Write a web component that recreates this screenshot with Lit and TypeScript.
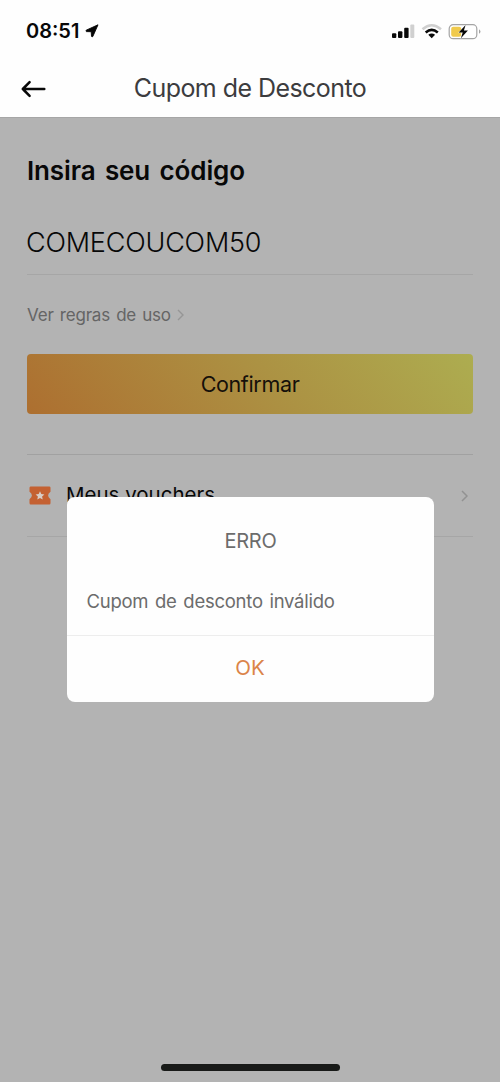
import { LitElement, html, css } from "lit";
import { customElement } from "lit/decorators.js";

@customElement("app-root")
export class AppRoot extends LitElement {
  static styles = css`
    :host { display: block; position: relative; width: 500px; height: 1082px; overflow: hidden; background: #b3b3b3; font-family: Inter, "Liberation Sans", sans-serif; color: #080808; }
    * { box-sizing: border-box; }
    svg { display: block; flex: none; }
    header { height: 117px; background: #fefefe; }
    .status { height: 60px; padding: 1px 18px 0 26px; display: flex; align-items: center; }
    .time { font-size: 20px; font-weight: 600; letter-spacing: 0; line-height: 24px; margin-right: 5px; width: 54px; white-space: nowrap; }
    .system { margin-left: auto; }
    .nav { height: 57px; display: grid; grid-template-columns: 68px 1fr 68px; align-items: center; }
    .back { margin-left: 20px; }
    h1 { margin: 0; padding-bottom: 1px; font-size: 25px; font-weight: 380; line-height: 30px; color: #3c3c3e; text-align: center; letter-spacing: -.55px; white-space: nowrap; }
    main { padding: 37px 27px 0; border-top: 1px solid #a6a6a6; }
    h2 { margin: 0; font-size: 26px; font-weight: 570; line-height: 32px; word-spacing: 3px; letter-spacing: -.12px; white-space: nowrap; }
    .code { height: 88px; padding-top: 38px; font-size: 27px; font-weight: 350; line-height: 36px; letter-spacing: -.2px; text-indent: -1px; border-bottom: 1px solid #a6a6a6; white-space: nowrap; }
    .rules { height: 79px; padding-top: 28px; display: flex; align-items: flex-start; gap: 6px; font-size: 17px; line-height: 25px; letter-spacing: -.18px; word-spacing: 1.5px; color: #656565; white-space: nowrap; }
    .rules svg { margin-top: 6px; }
    .confirm { display: block; width: 100%; height: 60px; border: 0; padding: 0; border-radius: 4px; background: linear-gradient(50deg, #ad6f30, #ac9042 52%, #adad50); color: #15100a; font: 380 21.5px/60px Inter, sans-serif; letter-spacing: -.35px; text-align: center; }
    .vouchers { margin-top: 40px; height: 83px; border-top: 1px solid #a1a1a1; border-bottom: 1px solid #a6a6a6; display: flex; align-items: center; font-size: 20.5px; white-space: nowrap; }
    .ticket { margin: 0 15px 0 2px; }
    .label { padding-bottom: 3px; font-weight: 380; }
    .more { margin-left: auto; margin-right: 5px; }
    .dialog { position: absolute; left: 67px; top: 497px; width: 367px; height: 205px; background: #fefefe; border-radius: 8px; }
    .title { padding-top: 30px; font-size: 20px; font-weight: 370; line-height: 28px; letter-spacing: -.3px; text-align: center; color: #6c6c6c; }
    .message { padding: 32px 19.5px 0; height: 80px; font-size: 18.5px; line-height: 29px; letter-spacing: -.26px; word-spacing: 1.8px; color: #6c6c6c; white-space: nowrap; }
    .ok { height: 67px; border-top: 1px solid #ededed; text-align: center; font-size: 20.5px; font-weight: 370; line-height: 64px; text-indent: -1px; color: #db8449; }
    .home { position: absolute; left: 161px; top: 1064px; width: 179px; height: 7px; border-radius: 4px; background: #181a18; }
  `;

  render() {
    return html`
      <header>
        <div class="status">
          <span class="time">08:51</span>
          <svg width="14" height="14" viewBox="0 0 14 14"><path d="M13 .8 1.2 6.2Q.6 7.4 1.5 7.6L6.2 7.7 6.5 12.2Q7 13.5 7.8 12.5Z" fill="#050505" stroke="#050505" stroke-width=".9" stroke-linejoin="round"/></svg>
          <svg class="system" width="91" height="18" viewBox="0 0 91 18">
            <g fill="#090909"><rect x="1" y="11.2" width="4.3" height="4.8" rx="1"/><rect x="7" y="9.2" width="4.4" height="6.8" rx="1"/><rect x="13.2" y="5.7" width="4.4" height="10.3" rx="1"/></g>
            <rect x="19.3" y="2.5" width="4" height="13.5" rx="1" fill="#d0d0d0"/>
            <g fill="none" stroke-width="2.6"><path d="M31.5 7.2Q40.7-.7 50 7.2" stroke="#d0d0d0"/><path d="M34.7 10.4Q40.7 5.3 46.8 10.4" stroke="#090909"/></g>
            <path d="m37.3 12.8q3.4-2.5 6.8 0l-3.4 3.4Z" fill="#090909"/>
            <rect x="58.2" y="2.7" width="27.6" height="14" rx="4" fill="#fff" stroke="#a4a4a4" stroke-width="1.2"/>
            <rect x="60.2" y="4.7" width="10" height="10" rx="2" fill="#f0ca4c"/>
            <path d="M88 7.2q3 2.3 0 4.6Z" fill="#a4a4a4"/>
            <path d="M74.6 3 67.7 10.6h4l-1.8 5.6 7-7.8h-4Z" fill="#080808" stroke="#fff" stroke-width=".7" paint-order="stroke"/>
          </svg>
        </div>
        <div class="nav">
          <svg class="back" width="27" height="20" viewBox="0 0 27 20"><path d="M24.3 10H2.8M9.6 3.2 2.8 10l6.8 6.8" fill="none" stroke="#080808" stroke-width="2.5" stroke-linecap="round" stroke-linejoin="round"/></svg>
          <h1>Cupom de Desconto</h1>
        </div>
      </header>
      <main>
        <h2>Insira seu código</h2>
        <div class="code">COMECOUCOM50</div>
        <div class="rules"><span>Ver regras de uso</span><svg width="7" height="12" viewBox="0 0 7 12"><path d="m1 1 5 5-5 5" fill="none" stroke="#969696" stroke-width="1.4"/></svg></div>
        <button class="confirm">Confirmar</button>
        <div class="vouchers">
          <svg class="ticket" width="22" height="19" viewBox="0 0 22 19"><path d="M1.5.5h19q1.2 0 1 1.5v3.8q-4.8 3.7 0 7.4V17q0 1.5-1.2 1.5H1.7Q.5 18.5.5 17v-3.8q4.8-3.7 0-7.4V2Q.4.6 1.5.5Z" fill="#c46132"/><path d="m11 5.2 1.3 2.8 3.1.4-2.3 2.1.6 3-2.7-1.5-2.7 1.5.6-3-2.3-2.1 3.1-.4Z" fill="#d8cdc7"/></svg>
          <span class="label">Meus vouchers</span>
          <svg class="more" width="7" height="12" viewBox="0 0 7 12"><path d="m1 1 5 5-5 5" fill="none" stroke="#929292" stroke-width="1.5"/></svg>
        </div>
      </main>
      <section class="dialog" role="dialog">
        <div class="title">ERRO</div>
        <div class="message">Cupom de desconto inválido</div>
        <div class="ok">OK</div>
      </section>
      <div class="home"></div>
    `;
  }
}
